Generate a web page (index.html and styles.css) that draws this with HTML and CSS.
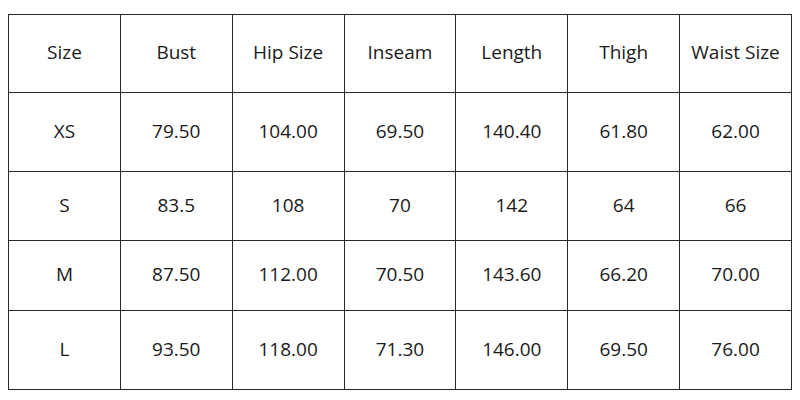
FILE: index.html
```html
<!DOCTYPE html>
<html>
<head>
<meta charset="utf-8">
<link rel="stylesheet" href="styles.css">
</head>
<body>
<table class="size-table">
  <tr class="r-head"><td>Size</td><td>Bust</td><td>Hip Size</td><td>Inseam</td><td>Length</td><td>Thigh</td><td>Waist Size</td></tr>
  <tr class="r-xs"><td>XS</td><td>79.50</td><td>104.00</td><td>69.50</td><td>140.40</td><td>61.80</td><td>62.00</td></tr>
  <tr class="r-s"><td>S</td><td>83.5</td><td>108</td><td>70</td><td>142</td><td>64</td><td>66</td></tr>
  <tr class="r-m"><td>M</td><td>87.50</td><td>112.00</td><td>70.50</td><td>143.60</td><td>66.20</td><td>70.00</td></tr>
  <tr class="r-l"><td>L</td><td>93.50</td><td>118.00</td><td>71.30</td><td>146.00</td><td>69.50</td><td>76.00</td></tr>
</table>
</body>
</html>
```
FILE: styles.css
```css
html, body { background: #fff; }
body { margin: 14px 8px 0 8px; font-family: "Open Sans", sans-serif; color: #1a1a1a; }
.size-table { border-collapse: collapse; width: 784px; table-layout: fixed; }
.size-table td { border: 1px solid #2a2a2a; text-align: center; vertical-align: middle; font-size: 19px; padding: 0 0 3px 0; }
.r-head td { height: 74px; }
.r-xs td { height: 75px; }
.r-s td { height: 65px; }
.r-m td { height: 66px; }
.r-l td { height: 75px; }
```
